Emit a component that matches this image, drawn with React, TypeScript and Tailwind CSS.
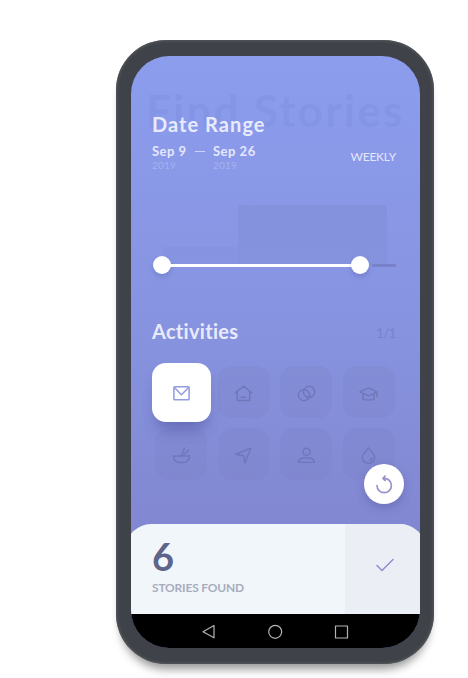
import type { ReactNode } from "react";

const stroke = { fill: "none", stroke: "currentColor", strokeLinecap: "round", strokeLinejoin: "round" } as const;

function Icon({ children, width = 1.5 }: { children: ReactNode; width?: number }) {
  return (
    <svg className="mt-[2px] size-[19px]" viewBox="0 0 20 20" strokeWidth={width} {...stroke}>
      {children}
    </svg>
  );
}

const activities: ReactNode[] = [
  <Icon width={1.6}><rect x="2" y="3" width="16" height="13.600" rx="0.8" /><path d="M2.800 4 10 11.400 17.200 4" /></Icon>,
  <Icon><path d="M1.300 9.300 10 2.200l8.700 7.100M3.400 7.800v9.600h13.200V7.800M7.700 14h4.600" /></Icon>,
  <Icon><circle cx="7.300" cy="11.700" r="5.900" /><circle cx="12.700" cy="8.300" r="5.900" /></Icon>,
  <Icon><path d="m.9 8.300 9.100-4.200 9.100 4.200-9.100 4.200zM4.200 10v4.700q0 2 2 2h7.600q2 0 2-2V10M18.800 8.600v4.600" /></Icon>,
  <Icon><path d="M1.500 10.600h17c0 4-3.200 6.800-6.400 6.800H7.900C4.700 17.400 1.500 14.600 1.500 10.600zM10 10.200l3.200-8M12.200 9.800l5.300-5.500" /></Icon>,
  <Icon><path d="M18 2.200 11.300 18l-.8-7.500-8.500-1.800z" /></Icon>,
  <Icon><circle cx="10" cy="6" r="3.700" /><path d="M1.600 17.200c.2-3.600 2.800-4.900 8.400-4.900s8.200 1.300 8.400 4.900z" /></Icon>,
  <Icon><path d="M10 2C7.600 5 3.500 9 3.500 12.300a6.500 5.900 0 0 0 13 0C16.500 9 12.400 5 10 2z" /><path d="M13.500 12.700q-.3 2-2.200 2.300" /></Icon>,
];

function Heading({ children }: { children: ReactNode }) {
  return <h2 className="text-[20px] leading-6 font-bold text-[#e8ebfd]">{children}</h2>;
}

function DateLabel({ day }: { day: string }) {
  return (
    <div>
      <div className="h-4 text-[13px] leading-4 font-bold tracking-[0.5px] text-[#e4e8fd]">{day}</div>
      <div className="-mt-px text-[10px] leading-[14px] tracking-[0.2px] text-[#a6b2f1]">2019</div>
    </div>
  );
}

function DateRange() {
  return (
    <section className="pr-6 pl-[21px]">
      <div className="tracking-[1.050px]"><Heading>Date Range</Heading></div>
      <div className="mt-[7px] flex h-7 items-start justify-between">
        <div className="flex whitespace-nowrap">
          <div className="w-[43px]"><DateLabel day="Sep 9" /></div>
          <div className="mt-[8px] mr-[8px] h-px w-[10px] bg-[#cdd4fa]" />
          <DateLabel day="Sep 26" />
        </div>
        <span className="mt-[6px] text-[12px] leading-4 tracking-[-0.2px] text-[#e2e7fd]">WEEKLY</span>
      </div>
      <div className="mt-[34px] ml-[11px] flex h-[60px] items-end">
        <div className="h-[18px] w-[75px] bg-linear-to-b from-[#7886cf]/20 to-[#7886cf]/5" />
        <div className="h-[60px] w-[149px] rounded-t-[3px] bg-linear-to-b from-[#7480c3]/25 to-[#7480c3]/15" />
      </div>
      <div className="relative -mt-[9px] flex h-[18px] items-center">
        <span className="ml-px size-[18px] rounded-full bg-white shadow-[0_3px_5px_rgba(65,70,145,0.22)]" />
        <span className="-mx-px h-[3px] w-[182px] bg-white" />
        <span className="size-[18px] rounded-full bg-white shadow-[0_3px_5px_rgba(65,70,145,0.22)]" />
        <span className="ml-[3px] h-[3px] flex-1 bg-[#7782c9]" />
      </div>
    </section>
  );
}

function Activities() {
  return (
    <section className="mt-[45px]">
      <div className="flex items-center justify-between pr-6 pl-[21px]">
        <div className="tracking-[0.3px]"><Heading>Activities</Heading></div>
        <span className="mt-1 text-[13px] leading-4 tracking-[-0.4px] text-[#7782ca]">1/1</span>
      </div>
      <div className="mt-[18px] ml-[19px] grid w-[250px] grid-cols-4">
        {activities.map((icon, index) => (
          <div key={index} className="flex h-[62px] items-center justify-center">
            {index === 0 ? (
              <div className="relative flex size-[59px] shrink-0 items-center justify-center rounded-[14px] bg-white text-[#929cdf] shadow-[0_12px_14px_-5px_rgba(65,65,140,0.45)]">{icon}</div>
            ) : (
              <div className="flex size-[52px] items-center justify-center rounded-[14px] bg-[#777dbe]/20 text-[#7077b9]">{icon}</div>
            )}
          </div>
        ))}
      </div>
    </section>
  );
}

function Results() {
  return (
    <footer className="-mx-[5px] flex h-[90px] shrink-0 overflow-hidden rounded-t-[25px] bg-[#f1f6fa]">
      <div className="flex-1 pl-[26px]">
        <div className="mt-[12px] w-[22px] text-[38px] leading-10 font-bold text-[#5f648a]">6</div>
        <div className="mt-[4px] text-[12px] leading-4 font-bold tracking-[-0.2px] text-[#a8acbd]">STORIES FOUND</div>
      </div>
      <div className="flex w-[80px] items-start bg-[#ebeff5] pt-[34px] pl-[31px] text-[#928bcf]">
        <svg className="h-[14px] w-[18px]" viewBox="0 0 18 14" strokeWidth="1.500" {...stroke}>
          <path d="m1 7.500 5 5L17 1.500" />
        </svg>
      </div>
    </footer>
  );
}

function NavigationBar() {
  return (
    <nav className="h-[34px] shrink-0 bg-black pt-[10px] pl-[71px] text-[#b3b3b3]">
      <svg className="h-4 w-[148px]" viewBox="0 0 148 16" strokeWidth="1.200" {...stroke}>
        <path d="M12 1.500v12.300L1 7.700z" />
        <circle cx="73.200" cy="7.800" r="6.500" />
        <rect x="133.500" y="2" width="12" height="12" />
      </svg>
    </nav>
  );
}

export default function App() {
  return (
    <main className="h-[678px] w-[468px] overflow-hidden bg-white pt-10 pl-[116px] font-['Lato','Open_Sans',sans-serif]">
      <div className="h-[624px] w-[318px] rounded-[50px] bg-[#3f4349] px-[15px] py-4 shadow-[inset_0_0_3px_1px_#565a5e,0_10px_10px_-5px_rgba(0,0,0,0.42)]">
        <div className="relative flex h-[592px] w-[289px] flex-col overflow-hidden rounded-[38px] bg-linear-to-b from-[#8c9dee] via-[#8692de] to-[#7f80c8]">
          <div className="absolute top-[26px] left-[15px] text-[44px] leading-[56px] font-bold tracking-[2.250px] whitespace-nowrap text-[#7f90e0]/50">Find Stories</div>
          <div className="relative flex flex-1 flex-col pt-14">
            <DateRange />
            <Activities />
            <button className="absolute top-[408px] left-[233px] flex size-10 items-center justify-center rounded-full bg-white text-[#9a91c9] shadow-[0_4px_8px_rgba(50,50,120,0.25)]">
              <svg className="mt-px size-5" viewBox="0 0 20 20" strokeWidth="1.700" {...stroke}>
                <path d="M3 10.500a7.200 7.200 0 1 0 7.200-7.200M11 1.200 9 3.300l2 2.100" />
              </svg>
            </button>
          </div>
          <Results />
          <NavigationBar />
        </div>
      </div>
    </main>
  );
}
